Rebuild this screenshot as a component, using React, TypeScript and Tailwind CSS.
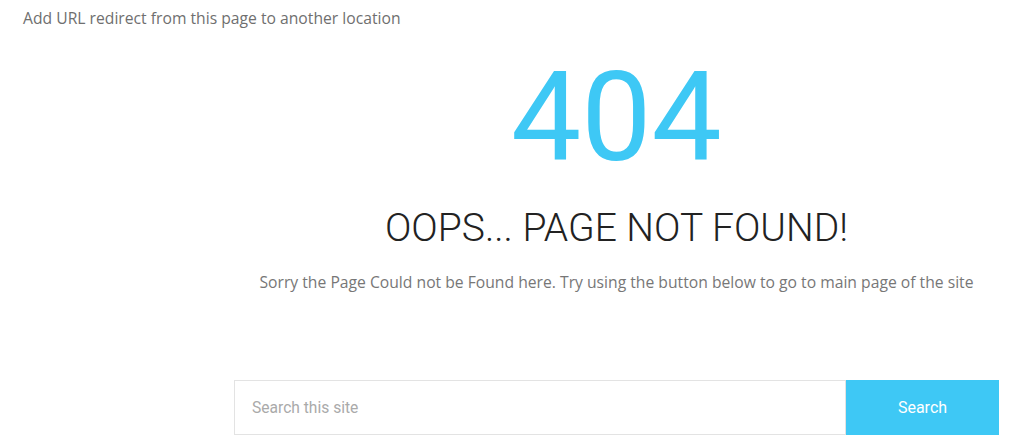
import React from "react";

export default function App() {
  return (
    <div className="w-[1024px] h-[436px] overflow-hidden bg-white">
      <div className="pl-[23px] pt-[6px] text-[15.7px] leading-[24px] text-[#6f6f6f] font-['Open_Sans',sans-serif]">
        Add URL redirect from this page to another location
      </div>
      <div className="ml-[234px] w-[765px] flex flex-col items-center text-center">
        <div className="mt-[25px] text-[125px] leading-[125px] font-normal text-[#3ec8f5] font-['Roboto',sans-serif]">
          404
        </div>
        <h1 className="mt-[23px] text-[39px] leading-[50px] font-light text-[#222] font-['Roboto',sans-serif]">
          OOPS... PAGE NOT FOUND!
        </h1>
        <p className="mt-[17px] text-[15.7px] leading-[24px] text-[#777] font-['Open_Sans',sans-serif]">
          Sorry the Page Could not be Found here. Try using the button below to go to main page of the site
        </p>
        <form className="mt-[86px] w-full flex h-[55px]" onSubmit={(e) => e.preventDefault()}>
          <input
            type="text"
            placeholder="Search this site"
            className="flex-1 min-w-0 h-full border border-[#e3e3e3] px-[17px] text-[15.6px] text-[#444] placeholder:text-[#aaa] outline-none font-['Roboto',sans-serif]"
          />
          <button
            type="submit"
            className="w-[153px] h-full bg-[#3ec8f5] text-white text-[16px] font-['Roboto',sans-serif]"
          >
            Search
          </button>
        </form>
      </div>
    </div>
  );
}
